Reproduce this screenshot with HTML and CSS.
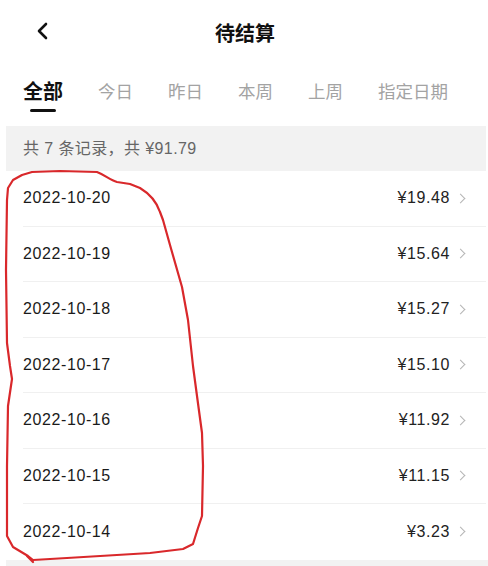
FILE: index.html
```
<!DOCTYPE html>
<html>
<head>
	<meta charset="utf-8">
	<title>待结算</title>
	<link rel="stylesheet" href="styles.css">
</head>
<body>
	<div id="page">
		<div class="nav">
			<svg class="back" width="12" height="18" viewBox="0 0 12 18"><path d="M10 2 L3 9 L10 16" fill="none" stroke="#111" stroke-width="2.6" stroke-linecap="round" stroke-linejoin="round"/></svg>
			<h1 class="title">待结算</h1>
		</div>

		<ul class="tabs">
			<li class="current">全部</li>
			<li>今日</li>
			<li>昨日</li>
			<li>本周</li>
			<li>上周</li>
			<li>指定日期</li>
		</ul>

		<div class="summary">共 7 条记录，共 ¥91.79</div>

		<ul class="list">
			<li><span class="date">2022-10-20</span><span class="money">¥19.48<i class="arrow"></i></span></li>
			<li><span class="date">2022-10-19</span><span class="money">¥15.64<i class="arrow"></i></span></li>
			<li><span class="date">2022-10-18</span><span class="money">¥15.27<i class="arrow"></i></span></li>
			<li><span class="date">2022-10-17</span><span class="money">¥15.10<i class="arrow"></i></span></li>
			<li><span class="date">2022-10-16</span><span class="money">¥11.92<i class="arrow"></i></span></li>
			<li><span class="date">2022-10-15</span><span class="money">¥11.15<i class="arrow"></i></span></li>
			<li><span class="date">2022-10-14</span><span class="money">¥3.23<i class="arrow"></i></span></li>
		</ul>
		<div class="bottom"></div>

		<!-- 手画的红圈 -->
		<svg class="mark" width="488" height="566" viewBox="0 0 488 566">
			<path d="M32 172 L60 171 L97 172 C105 175 110 180 117 182 L130 184 L140 188 C150 194 157 203 160 212 L163 220 L170 245 L182 287 L188 320 L193 366 L197 396 L202 433 L203 466 L202 516 L198 528 L193 544 L183 549 L150 553 L67 558 L33 560 L28 556 L13 547 L7 536 L7 466 L8 406 L12 379 L10 366 L7 343 L6 270 L7 200 L8 188 L13 180 L22 175 Z M27 556 L33 562" fill="none" stroke="#d9282b" stroke-width="2.2" stroke-linejoin="round" stroke-linecap="round"/>
		</svg>
	</div>
</body>
</html>
```

FILE: styles.css
```
*{
	margin: 0;
	padding: 0;
	box-sizing: border-box;
}
li{
	list-style: none;
}
body{
	background: #fff;
	font-family: "Liberation Sans", "Noto Sans CJK SC", sans-serif;
	color: #1a1a1a;
}
#page{
	position: relative;
	width: 488px;
	height: 566px;
	overflow: hidden;
}
.nav{
	height: 64px;
	display: flex;
	align-items: center;
	justify-content: center;
	position: relative;
}
.nav .back{
	position: absolute;
	left: 36px;
	top: 22px;
}
.title{
	font-size: 20px;
	font-weight: bold;
	color: #111;
	margin-left: 2px;
}
.tabs{
	display: flex;
	gap: 35px;
	padding-left: 23px;
	height: 62px;
	padding-top: 15px;
}
.tabs li{
	font-size: 17.5px;
	color: #a3a3a3;
	height: 33px;
	line-height: 26px;
	position: relative;
}
.tabs li.current{
	font-size: 20px;
	font-weight: bold;
	color: #111;
}
.tabs li.current::after{
	content: "";
	position: absolute;
	left: 7px;
	bottom: 0;
	width: 26px;
	height: 3px;
	border-radius: 2px;
	background: #111;
}
.summary{
	margin: 0 2px 0 6px;
	height: 45px;
	line-height: 45px;
	padding-left: 17px;
	background: #f2f2f2;
	font-size: 16px;
	letter-spacing: 0.4px;
	color: #666;
}
.list{
	margin: 0 2px 0 23px;
}
.list li{
	height: 55.5px;
	display: flex;
	align-items: center;
	justify-content: space-between;
	border-bottom: 1px solid #f0f0f0;
	padding-right: 22px;
	font-size: 16px;
	letter-spacing: 0.6px;
}
.list li:last-child{
	border-bottom: none;
}
.money{
	display: flex;
	align-items: center;
	color: #222;
}
.arrow{
	display: inline-block;
	width: 7px;
	height: 7px;
	border-top: 1px solid #b5b5b5;
	border-right: 1px solid #b5b5b5;
	transform: rotate(45deg);
	margin-left: 7px;
}
.bottom{
	margin-left: 6px;
	height: 8px;
	background: #f2f2f2;
}
.mark{
	position: absolute;
	left: 0;
	top: 0;
	pointer-events: none;
}
```
